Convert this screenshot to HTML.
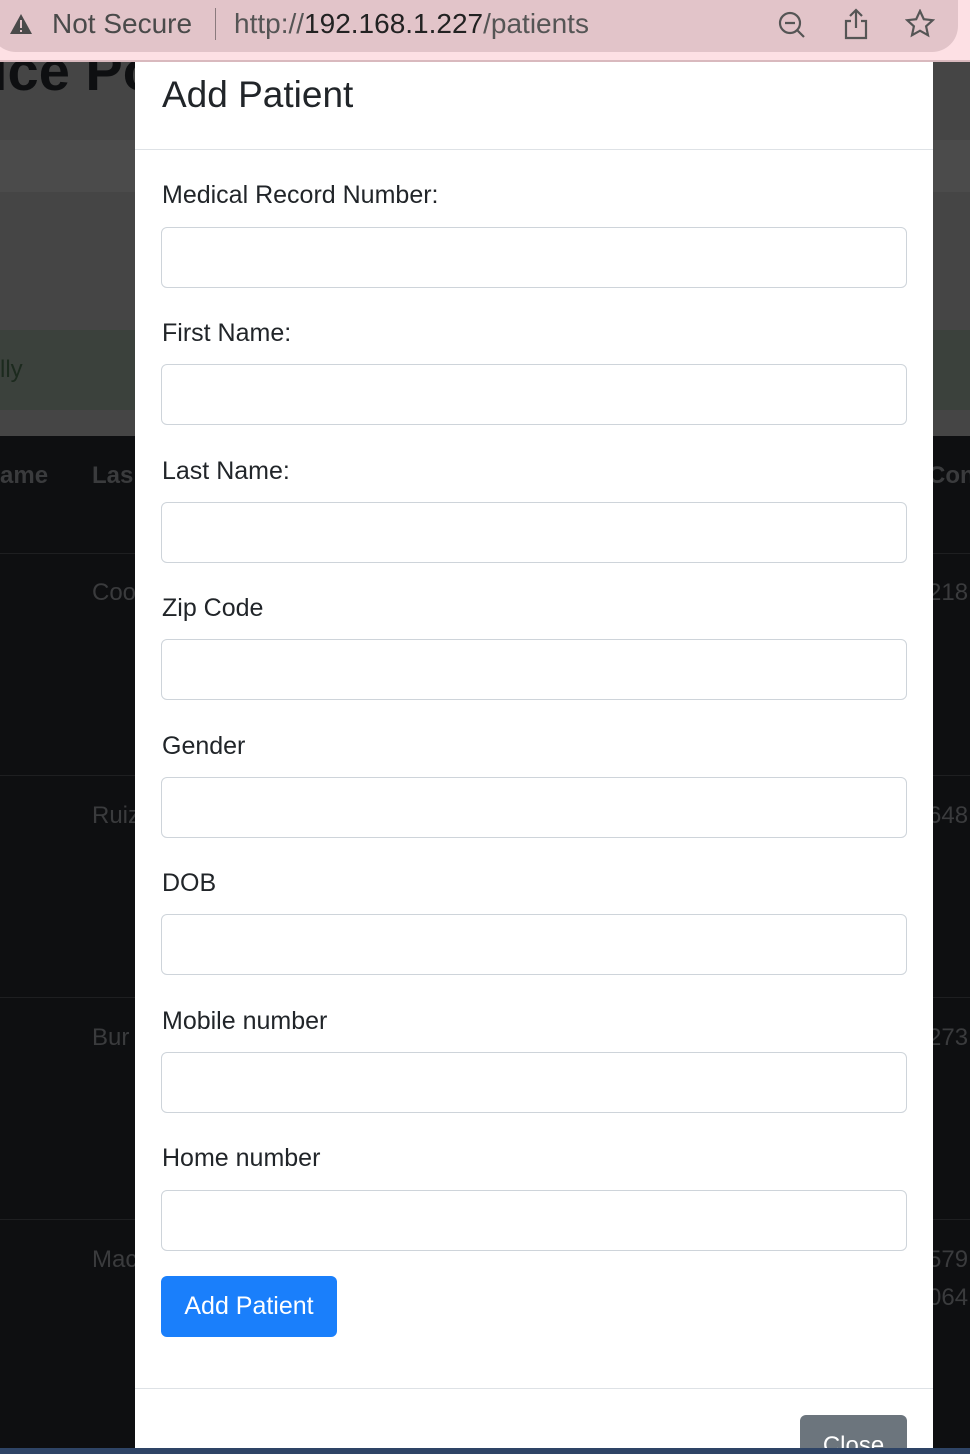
<!DOCTYPE html>
<html><head><meta charset="utf-8"><style>
*{box-sizing:border-box;margin:0;padding:0}
body{width:970px;height:1454px;overflow:hidden;position:relative;background:#0e0f11;font-family:"Liberation Sans",sans-serif}
.abs{position:absolute}
.lbl{position:absolute;left:162px;font-size:25px;color:#212529}
.inp{position:absolute;left:161px;width:746px;height:61px;border:1px solid #ced4da;border-radius:6px;background:#fff}
.bg{color:#3a3b3d;font-size:24px;position:absolute}
</style></head><body>
<div class="abs" style="left:0;top:62px;width:970px;height:374px;background:#454545;overflow:hidden">
<div class="abs" style="left:0;top:78px;width:970px;height:52px;background:#4b4b4b"></div>
<div class="abs" style="left:0;top:268px;width:970px;height:80px;background:#3b413c"></div>
<div class="abs" style="left:-8px;top:-24px;font-size:56px;font-weight:bold;color:#0e0f11">ice Po</div>
<div class="abs" style="left:0;top:294px;font-size:24px;color:#1c2a1e">lly</div>
</div>
<div class="abs" style="left:0;top:0;width:970px;height:62px;background:#fde0e4"></div>
<div class="abs" style="left:-10px;top:0;width:968px;height:52px;background:#e2c4c9;border-radius:0 0 26px 26px"></div>
<div class="abs" style="left:0;top:60px;width:970px;height:2px;background:#d9b9be"></div>
<svg class="abs" style="left:9px;top:13px" width="24" height="22" viewBox="0 0 24 22"><path d="M12 1 L23 21 L1 21 Z" fill="#4a4a4a"/><rect x="11" y="7" width="2" height="8" fill="#e2c4c9"/><rect x="11" y="17" width="2" height="2" fill="#e2c4c9"/></svg>
<div class="abs" style="left:52px;top:8px;font-size:28px;color:#4a4a4a">Not Secure</div>
<div class="abs" style="left:215px;top:8px;width:1px;height:32px;background:#8a7a7d"></div>
<div class="abs" style="left:234px;top:8px;font-size:28px;color:#555">http://<span style="color:#222">192.168.1.227</span>/patients</div>
<svg class="abs" style="left:777px;top:10px" width="30" height="30" viewBox="0 0 30 30" fill="none" stroke="#555" stroke-width="2.2"><circle cx="13" cy="13" r="10"/><path d="M8 13h10M20 20l7 7"/></svg>
<svg class="abs" style="left:843px;top:8px" width="26" height="32" viewBox="0 0 26 32" fill="none" stroke="#555" stroke-width="2.2"><path d="M13 2v18M7 8l6-6 6 6M8 13H3v17h20V13h-5"/></svg>
<svg class="abs" style="left:905px;top:9px" width="30" height="30" viewBox="0 0 30 30" fill="none" stroke="#555" stroke-width="2.2"><path d="M15 2l3.8 8.2 9 1-6.7 6.1 1.9 8.9L15 21.7 7 26.2l1.9-8.9L2.2 11.2l9-1z"/></svg>

<div class="abs" style="left:0;top:462px;font-size:24px;font-weight:bold;color:#3a3b3d">ame</div>
<div class="abs" style="left:92px;top:462px;font-size:24px;font-weight:bold;color:#3a3b3d">Las</div>
<div class="abs" style="left:928px;top:462px;font-size:24px;font-weight:bold;color:#3a3b3d">Con</div>
<div class="abs" style="left:0;top:553px;width:970px;height:1px;background:#1e1f21"></div>
<div class="abs" style="left:0;top:775px;width:970px;height:1px;background:#1e1f21"></div>
<div class="abs" style="left:0;top:997px;width:970px;height:1px;background:#1e1f21"></div>
<div class="abs" style="left:0;top:1219px;width:970px;height:1px;background:#1e1f21"></div>
<div class="bg" style="left:92px;top:579px">Coo</div><div class="bg" style="left:928px;top:579px">218.</div>
<div class="bg" style="left:92px;top:802px">Ruiz</div><div class="bg" style="left:928px;top:802px">648</div>
<div class="bg" style="left:92px;top:1024px">Bur</div><div class="bg" style="left:928px;top:1024px">273</div>
<div class="bg" style="left:92px;top:1246px">Mac</div><div class="bg" style="left:928px;top:1246px">579</div>
<div class="bg" style="left:928px;top:1284px">064</div>
<div class="abs" style="left:0;top:1448px;width:970px;height:6px;background:#2e4466"></div>

<div class="abs" style="left:135px;top:62px;width:798px;height:1386px;background:#fff">
<div class="abs" style="left:27px;top:12px;font-size:37px;color:#212529">Add Patient</div>
<div class="abs" style="left:0;top:87px;width:798px;height:1px;background:#dee2e6"></div>
<div class="abs" style="left:0;top:1326px;width:798px;height:1px;background:#dee2e6"></div>
</div>
<div class="lbl" style="top:181px">Medical Record Number:</div><div class="inp" style="top:227px"></div>
<div class="lbl" style="top:319px">First Name:</div><div class="inp" style="top:364px"></div>
<div class="lbl" style="top:457px">Last Name:</div><div class="inp" style="top:502px"></div>
<div class="lbl" style="top:594px">Zip Code</div><div class="inp" style="top:639px"></div>
<div class="lbl" style="top:732px">Gender</div><div class="inp" style="top:777px"></div>
<div class="lbl" style="top:869px">DOB</div><div class="inp" style="top:914px"></div>
<div class="lbl" style="top:1007px">Mobile number</div><div class="inp" style="top:1052px"></div>
<div class="lbl" style="top:1144px">Home number</div><div class="inp" style="top:1190px"></div>
<div class="abs" style="left:161px;top:1276px;width:176px;height:61px;background:#1a7ffb;border-radius:6px;color:#fff;font-size:25px;line-height:61px;text-align:center">Add Patient</div>
<div class="abs" style="left:800px;top:1415px;width:107px;height:33px;overflow:hidden"><div style="width:107px;height:61px;background:#6c757d;border-radius:6px;color:#fff;font-size:24px;line-height:61px;text-align:center">Close</div></div>
</body></html>
